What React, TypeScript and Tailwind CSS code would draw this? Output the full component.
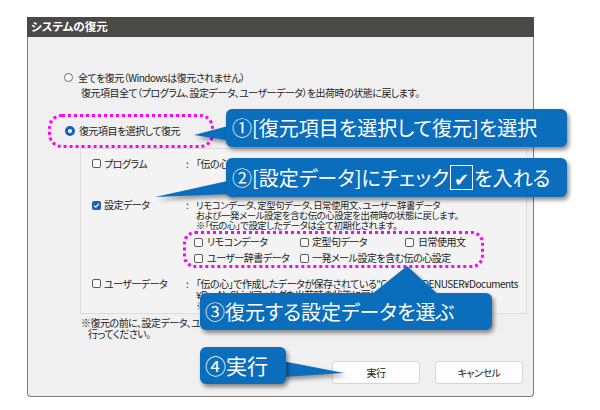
import React from "react";

function Radio({ checked }: { checked?: boolean }) {
  return checked ? (
    <span className="inline-block w-[10px] h-[10px] rounded-full border-[3px] border-[#1560bd] bg-white shrink-0" />
  ) : (
    <span className="inline-block w-[9px] h-[9px] rounded-full border border-[#6b6b6b] bg-white shrink-0" />
  );
}

function Check({ checked }: { checked?: boolean }) {
  return checked ? (
    <span className="inline-flex items-center justify-center w-[9px] h-[9px] rounded-[2px] bg-[#1a62c0] shrink-0">
      <svg width="7" height="7" viewBox="0 0 7 7">
        <path d="M1 3.6 L2.8 5.2 L6 1.6" stroke="white" strokeWidth="1.2" fill="none" />
      </svg>
    </span>
  ) : (
    <span className="inline-block w-[9px] h-[9px] rounded-[2px] border border-[#5a5a5a] bg-white shrink-0" />
  );
}

function Callout({ className, children }: { className: string; children: React.ReactNode }) {
  return (
    <div
      className={
        "absolute flex items-center bg-[#0b6ebd] text-white rounded-[6px] shadow-[2px_3px_4px_rgba(0,0,0,0.45)] font-['Noto_Sans_CJK_JP',sans-serif] tracking-normal whitespace-nowrap " +
        className
      }
    >
      {children}
    </div>
  );
}

function Sub({ w, gap, label }: { w: string; gap: string; label: string }) {
  return (
    <div className={"h-[16px] flex items-center shrink-0 " + w + " " + gap}>
      <Check />
      <span>{label}</span>
    </div>
  );
}

export default function App() {
  return (
    <div className="relative w-[600px] h-[410px] bg-white overflow-hidden font-['Noto_Sans_CJK_JP',sans-serif] [font-feature-settings:'palt'] text-[#222]">
      <div className="pt-[17px] pl-[27px]">
        <div className="w-[507px] h-[380px] flex flex-col">
          <div className="h-[20px] bg-[#4a4947] flex items-center pl-[4px] text-white text-[11.5px] font-bold">
            システムの復元
          </div>
          <div className="flex-1 flex flex-col bg-[#f0f0f0] border-x border-b border-[#7d7d7d] rounded-b-[4px] text-[10px] tracking-[-0.5px] whitespace-nowrap">
            <div className="mt-[33px] h-[15px] flex items-center pl-[36px] gap-[5px] leading-[15px]">
              <Radio />
              <span>全てを復元（Windowsは復元されません）</span>
            </div>
            <div className="h-[15px] pl-[53px] leading-[15px]">
              復元項目全て（プログラム、設定データ、ユーザーデータ）を出荷時の状態に戻します。
            </div>
            <div className="mt-[23px] h-[15px] flex items-center pl-[37px] gap-[4px] leading-[15px]">
              <Radio checked />
              <span>復元項目を選択して復元</span>
            </div>
            <div className="mt-[10px] ml-[52px] mr-[6px] h-[166px] bg-[#f3f3f3] border border-[#dcdcdc] pt-[7px] flex flex-col">
              <div className="h-[15px] flex leading-[15px]">
                <div className="w-[105px] pl-[11px] flex items-center gap-[3px]">
                  <Check />
                  <span>プログラム</span>
                </div>
                <div className="w-[10px]">:</div>
                <div>「伝の心」のプログラムを出荷時の状態に戻します。</div>
              </div>
              <div className="mt-[29px] flex leading-[10px]">
                <div className="w-[105px] pl-[11px] flex items-center gap-[3px] h-[10px]">
                  <Check checked />
                  <span>設定データ</span>
                </div>
                <div className="w-[10px]">:</div>
                <div className="flex flex-col text-[9.4px] tracking-[-0.4px]">
                  <div>リモコンデータ、定型句データ、日常使用文、ユーザー辞書データ</div>
                  <div>および一発メール設定を含む伝の心設定を出荷時の状態に戻します。</div>
                  <div>※「伝の心」で設定したデータは全て初期化されます。</div>
                </div>
              </div>
              <div className="mt-[4px] ml-[113px] flex flex-col leading-[16px]">
                <div className="flex">
                  <Sub w="w-[106px]" gap="gap-[4px]" label="リモコンデータ" />
                  <Sub w="w-[105px]" gap="gap-[3px]" label="定型句データ" />
                  <Sub w="w-[90px]" gap="gap-[4px]" label="日常使用文" />
                </div>
                <div className="flex">
                  <Sub w="w-[106px]" gap="gap-[4px]" label="ユーザー辞書データ" />
                  <Sub w="w-[180px]" gap="gap-[3px]" label="一発メール設定を含む伝の心設定" />
                </div>
              </div>
              <div className="mt-[12px] flex leading-[11px]">
                <div className="w-[105px] pl-[11px] flex items-center gap-[3px] h-[11px]">
                  <Check />
                  <span>ユーザーデータ</span>
                </div>
                <div className="w-[10px]">:</div>
                <div className="flex flex-col">
                  <div>「伝の心」で作成したデータが保存されている"C:¥Users¥DENUSER¥Documents</div>
                  <div>¥DenNoShin"フォルダを出荷時の状態に戻します。</div>
                  <div>※作成したデータは全て削除されます。</div>
                </div>
              </div>
            </div>
            <div className="mt-[3px] pl-[53px] leading-[11px]">
              <div>※復元の前に、設定データ、ユーザーデータのバックアップを</div>
              <div className="pl-[7px]">行ってください。</div>
            </div>
            <div className="mt-[22px] flex justify-end gap-[15px] pr-[10px]">
              <button className="w-[88px] h-[23px] bg-[#fdfdfd] border border-[#d6d6d6] rounded-[3px] text-[10px] text-[#222]">
                実行
              </button>
              <button className="w-[88px] h-[23px] bg-[#fdfdfd] border border-[#d6d6d6] rounded-[3px] text-[10px] text-[#222]">
                キャンセル
              </button>
            </div>
          </div>
        </div>
      </div>

      {/* highlight rings */}
      <div className="absolute left-[48px] top-[114px] w-[166px] h-[34px] rounded-[14px] border-[3px] border-dotted border-[#ff00ff]" />
      <div className="absolute left-[183px] top-[231px] w-[301px] h-[37px] rounded-[12px] border-[3px] border-dotted border-[#ff00ff]" />

      {/* callout tails */}
      <svg
        className="absolute left-0 top-0 drop-shadow-[2px_3px_2px_rgba(0,0,0,0.4)]"
        width="600"
        height="410"
        viewBox="0 0 600 410"
      >
        <polygon points="194,135 232,125 232,141" fill="#0b6ebd" />
        <polygon points="155,197 232,180 232,194" fill="#0b6ebd" />
        <polygon points="407,266 367,298 442,298" fill="#0b6ebd" />
        <polygon points="344,373 282,361 282,377" fill="#0b6ebd" />
      </svg>

      <Callout className="left-[226px] top-[109px] w-[341px] h-[38px] pl-[6px] text-[20px]">
        ①[復元項目を選択して復元]を選択
      </Callout>
      <Callout className="left-[226px] top-[158px] w-[341px] h-[39px] pl-[6px] text-[20px]">
        ②[設定データ]にチェック
        <span className="inline-flex items-center justify-center w-[23px] h-[25px] border border-white text-[18px] leading-none mx-[1px]">
          ✔
        </span>
        を入れる
      </Callout>
      <Callout className="left-[200px] top-[293px] w-[292px] h-[37px] pl-[5px] text-[20px]">
        ③復元する設定データを選ぶ
      </Callout>
      <Callout className="left-[200px] top-[347px] w-[86px] h-[37px] pl-[5px] text-[21px]">
        ④実行
      </Callout>
    </div>
  );
}
